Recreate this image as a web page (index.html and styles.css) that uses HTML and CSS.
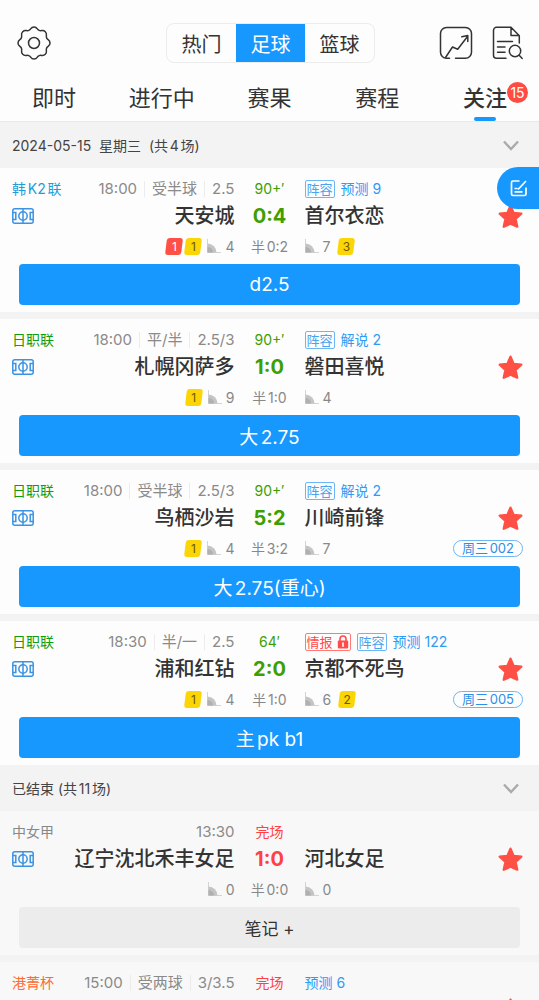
FILE: index.html
```html
<!DOCTYPE html>
<html lang="zh-CN">
<head>
    <meta charset="UTF-8">
    <meta name="viewport" content="width=device-width, initial-scale=1.0">
    <title>足球比分 - 关注</title>
    <link rel="stylesheet" href="styles.css">
</head>
<body>
    <!-- shared icons -->
    <svg class="sprite" aria-hidden="true">
        <symbol id="icon-pitch" viewBox="0 0 22 16">
            <g fill="none" stroke="currentColor" stroke-width="1.5">
                <rect x="0.8" y="0.8" width="20.4" height="14.4" rx="2"/>
                <path d="M11 0.8v14.4M0.8 4.5h3v7h-3M21.2 4.500h-3v7h3"/>
                <circle cx="11" cy="8" r="4.2"/>
            </g>
        </symbol>
        <symbol id="icon-corner" viewBox="0 0 14 14">
            <path d="M0.5 0v13.5H14" fill="none" stroke="#d4d4d4"/>
            <path d="M0.5 4.5a9 9 0 0 1 9 9h-9z" fill="#c4c4c4"/>
            <path d="M0.5 8a5.5 5.5 0 0 1 5.5 5.5H0.5z" fill="#b0b0b0"/>
        </symbol>
        <symbol id="icon-star" viewBox="0 0 24 24">
            <path d="M12 1.6l3 6.9 7.4 0.8-5.5 5.1 1.6 7.4L12 18.9l-6.500 2.900 1.600-7.400L1.600 9.300 9 8.500z" fill="currentColor" stroke="currentColor" stroke-width="2.2" stroke-linejoin="round"/>
        </symbol>
        <symbol id="icon-down" viewBox="0 0 16 11">
            <path d="M1 1.5l7 7.5 7-7.5" fill="none" stroke="currentColor" stroke-width="2.4"/>
        </symbol>
        <symbol id="icon-lock" viewBox="0 0 12 14">
            <path d="M3 6V4a3 3 0 0 1 6 0v2" fill="none" stroke="currentColor" stroke-width="1.6"/>
            <rect x="0.8" y="5.5" width="10.4" height="8" rx="1" fill="currentColor"/>
            <path d="M6 8v3.2" stroke="#fff" stroke-width="1.6" stroke-linecap="round"/>
        </symbol>
    </svg>

    <div class="app">
        <header class="header">
            <div class="toolbar">
                <button class="icon-btn" aria-label="设置">
                    <svg width="34" height="34" viewBox="-17 -17 34 34" fill="none" stroke="#333" stroke-width="1.5" stroke-linejoin="round">
                        <path d="M-5.2 -12.6C-3 -13.2 -3.5 -16 0 -16S3 -13.2 5.2 -12.6C7.2 -11.5 8.8 -13.8 11.3 -11.3S11.5 -7.2 12.6 -5.2C13.2 -3 16 -3.5 16 0S13.2 3 12.6 5.2C11.5 7.2 13.8 8.8 11.3 11.3S7.2 11.5 5.2 12.6C3 13.2 3.5 16 0 16S-3 13.2 -5.2 12.6C-7.2 11.5 -8.8 13.8 -11.3 11.3S-11.5 7.2 -12.6 5.2C-13.2 3 -16 3.5 -16 0S-13.2 -3 -12.6 -5.2C-11.5 -7.2 -13.8 -8.8 -11.3 -11.3S-7.2 -11.5 -5.2 -12.6Z"/>
                        <circle r="5.5"/>
                    </svg>
                </button>
                <nav class="sports">
                    <button class="sport">热门</button>
                    <button class="sport active">足球</button>
                    <button class="sport">篮球</button>
                </nav>
                <div class="tools">
                    <button class="icon-btn" aria-label="走势">
                        <svg width="34" height="34" viewBox="0 0 34 34" fill="none" stroke="#333" stroke-width="1.5" stroke-linecap="round" stroke-linejoin="round">
                            <path d="M10.5 32.3H7.5a6 6 0 0 1-6-6V7.5a6 6 0 0 1 6-6h19a6 6 0 0 1 6 6v18.8a6 6 0 0 1-6 6H16.5"/>
                            <path d="M6.5 31.5l7-10.5 5.2 2.200L28.5 10.5M22.8 10.8l6-1.2v6"/>
                        </svg>
                    </button>
                    <button class="icon-btn" aria-label="资料">
                        <svg width="32" height="34" viewBox="0 0 32 34" fill="none" stroke="#333" stroke-width="1.5" stroke-linecap="round" stroke-linejoin="round">
                            <path d="M14 32.3H4.5a3 3 0 0 1-3-3v-25a3 3 0 0 1 3-3H19l8.3 8.5V17M19 1.5v8h8M5.5 15.5h15M5.5 21h7.5M5.5 26.3h7.5"/>
                            <circle cx="23" cy="25" r="5.7"/>
                            <path d="M27.2 29.2l3 3.2"/>
                        </svg>
                    </button>
                </div>
            </div>
            <nav class="tabs">
                <a class="tab" href="#">即时</a>
                <a class="tab" href="#">进行中</a>
                <a class="tab" href="#">赛果</a>
                <a class="tab" href="#">赛程</a>
                <a class="tab active" href="#">关注<span class="badge">15</span></a>
            </nav>
        </header>

        <main class="list">
            <button class="section">
                <span>2024-05-15&nbsp; 星期三&nbsp; (共4场)</span>
                <svg class="down"><use href="#icon-down"/></svg>
            </button>

            <article class="match">
                <div class="grid">
                    <div class="home">
                        <span class="league blue">韩K2联</span>
                        <span class="info"><span>18:00</span><span>受半球</span><span>2.5</span></span>
                    </div>
                    <div class="mid time">90+′</div>
                    <div class="away tags"><a class="tag" href="#">阵容</a><a class="link" href="#">预测 9</a></div>

                    <div class="home">
                        <svg class="pitch"><use href="#icon-pitch"/></svg>
                        <span class="team">天安城</span>
                    </div>
                    <div class="mid score">0:4</div>
                    <div class="away">
                        <span class="team">首尔衣恋</span>
                        <button class="star" aria-label="取消关注"><svg><use href="#icon-star"/></svg></button>
                    </div>

                    <div class="home stats"><span class="card red">1</span><span class="card">1</span><svg class="corner"><use href="#icon-corner"/></svg><span>4</span></div>
                    <div class="mid half">半0:2</div>
                    <div class="away stats"><svg class="corner"><use href="#icon-corner"/></svg><span>7</span><span class="card">3</span></div>
                </div>
                <button class="note">d2.5</button>
            </article>

            <article class="match">
                <div class="grid">
                    <div class="home">
                        <span class="league">日职联</span>
                        <span class="info"><span>18:00</span><span>平/半</span><span>2.5/3</span></span>
                    </div>
                    <div class="mid time">90+′</div>
                    <div class="away tags"><a class="tag" href="#">阵容</a><a class="link" href="#">解说 2</a></div>

                    <div class="home">
                        <svg class="pitch"><use href="#icon-pitch"/></svg>
                        <span class="team">札幌冈萨多</span>
                    </div>
                    <div class="mid score">1:0</div>
                    <div class="away">
                        <span class="team">磐田喜悦</span>
                        <button class="star" aria-label="取消关注"><svg><use href="#icon-star"/></svg></button>
                    </div>

                    <div class="home stats"><span class="card">1</span><svg class="corner"><use href="#icon-corner"/></svg><span>9</span></div>
                    <div class="mid half">半1:0</div>
                    <div class="away stats"><svg class="corner"><use href="#icon-corner"/></svg><span>4</span></div>
                </div>
                <button class="note">大2.75</button>
            </article>

            <article class="match">
                <div class="grid">
                    <div class="home">
                        <span class="league">日职联</span>
                        <span class="info"><span>18:00</span><span>受半球</span><span>2.5/3</span></span>
                    </div>
                    <div class="mid time">90+′</div>
                    <div class="away tags"><a class="tag" href="#">阵容</a><a class="link" href="#">解说 2</a></div>

                    <div class="home">
                        <svg class="pitch"><use href="#icon-pitch"/></svg>
                        <span class="team">鸟栖沙岩</span>
                    </div>
                    <div class="mid score">5:2</div>
                    <div class="away">
                        <span class="team">川崎前锋</span>
                        <button class="star" aria-label="取消关注"><svg><use href="#icon-star"/></svg></button>
                    </div>

                    <div class="home stats"><span class="card">1</span><svg class="corner"><use href="#icon-corner"/></svg><span>4</span></div>
                    <div class="mid half">半3:2</div>
                    <div class="away stats"><svg class="corner"><use href="#icon-corner"/></svg><span>7</span><span class="lottery">周三002</span></div>
                </div>
                <button class="note">大2.75(重心)</button>
            </article>

            <article class="match">
                <div class="grid">
                    <div class="home">
                        <span class="league">日职联</span>
                        <span class="info"><span>18:30</span><span>半/一</span><span>2.5</span></span>
                    </div>
                    <div class="mid time">64′</div>
                    <div class="away tags"><a class="tag intel" href="#">情报<svg><use href="#icon-lock"/></svg></a><a class="tag" href="#">阵容</a><a class="link" href="#">预测 122</a></div>

                    <div class="home">
                        <svg class="pitch"><use href="#icon-pitch"/></svg>
                        <span class="team">浦和红钻</span>
                    </div>
                    <div class="mid score">2:0</div>
                    <div class="away">
                        <span class="team">京都不死鸟</span>
                        <button class="star" aria-label="取消关注"><svg><use href="#icon-star"/></svg></button>
                    </div>

                    <div class="home stats"><span class="card">1</span><svg class="corner"><use href="#icon-corner"/></svg><span>4</span></div>
                    <div class="mid half">半1:0</div>
                    <div class="away stats"><svg class="corner"><use href="#icon-corner"/></svg><span>6</span><span class="card">2</span><span class="lottery">周三005</span></div>
                </div>
                <button class="note">主pk b1</button>
            </article>

            <button class="section">
                <span>已结束 (共11场)</span>
                <svg class="down"><use href="#icon-down"/></svg>
            </button>

            <article class="match finished">
                <div class="grid">
                    <div class="home">
                        <span class="league gray">中女甲</span>
                        <span class="info"><span>13:30</span></span>
                    </div>
                    <div class="mid time">完场</div>
                    <div class="away tags"></div>

                    <div class="home">
                        <svg class="pitch"><use href="#icon-pitch"/></svg>
                        <span class="team">辽宁沈北禾丰女足</span>
                    </div>
                    <div class="mid score">1:0</div>
                    <div class="away">
                        <span class="team">河北女足</span>
                        <button class="star" aria-label="取消关注"><svg><use href="#icon-star"/></svg></button>
                    </div>

                    <div class="home stats"><svg class="corner"><use href="#icon-corner"/></svg><span>0</span></div>
                    <div class="mid half">半0:0</div>
                    <div class="away stats"><svg class="corner"><use href="#icon-corner"/></svg><span>0</span></div>
                </div>
                <button class="note empty">笔记 +</button>
            </article>

            <article class="match finished">
                <div class="grid">
                    <div class="home">
                        <span class="league orange">港菁杯</span>
                        <span class="info"><span>15:00</span><span>受两球</span><span>3/3.5</span></span>
                    </div>
                    <div class="mid time">完场</div>
                    <div class="away tags"><a class="link" href="#">预测 6</a></div>

                    <div class="home"></div>
                    <div class="mid"></div>
                    <div class="away">
                        <button class="star" aria-label="取消关注"><svg><use href="#icon-star"/></svg></button>
                    </div>
                </div>
            </article>
        </main>

        <button class="float-btn" aria-label="写笔记">
            <svg width="18" height="18" viewBox="0 0 18 18" fill="none" stroke="#fff" stroke-width="1.7">
                <path d="M9.5 2H3a1.5 1.5 0 0 0-1.5 1.5V15A1.5 1.5 0 0 0 3 16.5h11.5A1.5 1.5 0 0 0 16 15V8.5M16 2L8 10.5M4.5 9.5h3M4.5 12.8h8"/>
            </svg>
        </button>
    </div>
</body>
</html>
```
FILE: styles.css
```css
* {
    box-sizing: border-box;
}
body {
    margin: 0;
    font-family: Inter, "Noto Sans CJK SC", sans-serif;
    text-autospace: normal;
    color: #333;
    background-color: #f3f3f3;
}
button {
    padding: 0;
    border: none;
    background: none;
    font-family: inherit;
    color: inherit;
    cursor: pointer;
}
a {
    color: inherit;
    text-decoration: none;
}
svg {
    display: block;
}
.sprite {
    position: absolute;
    width: 0;
    height: 0;
}
.app {
    position: relative;
    display: flex;
    flex-direction: column;
    height: 100vh;
}

/* header */
.header {
    background-color: #fdfdfd;
    border-bottom: 1px solid #e9e9e9;
}
.toolbar {
    display: grid;
    grid-template-columns: 1fr auto 1fr;
    align-items: center;
    justify-items: start;
    padding: 23px 15px 12px 17px;
}
.tools {
    display: flex;
    justify-self: end;
    gap: 19px;
}
.sports {
    display: flex;
    border: 1px solid #ececec;
    border-radius: 8px;
    overflow: hidden;
}
.sport {
    width: 69px;
    height: 38px;
    font-size: 20px;
}
.sport.active {
    background-color: #1698ff;
    color: #fff;
}
.tabs {
    display: grid;
    grid-template-columns: repeat(5, 1fr);
}
.tab {
    position: relative;
    height: 46px;
    line-height: 46px;
    font-size: 22px;
    text-align: center;
}
.tab.active {
    font-weight: 500;
}
.tab.active::after {
    content: "";
    position: absolute;
    left: 50%;
    bottom: 0;
    width: 22px;
    height: 4px;
    margin-left: -11px;
    border-radius: 2px;
    background-color: #1698ff;
}
.badge {
    position: absolute;
    top: 7px;
    right: 11px;
    width: 21px;
    height: 21px;
    border-radius: 50%;
    background-color: #ff4b41;
    color: #fff;
    font-size: 14px;
    font-weight: 400;
    line-height: 21px;
}

/* match list */
.list {
    flex: 1;
    min-height: 0;
    overflow-y: auto;
    scrollbar-width: none;
}
.section {
    display: flex;
    align-items: center;
    justify-content: space-between;
    width: 100%;
    height: 46px;
    padding: 0 20px 0 12px;
    background-color: #f3f3f3;
    color: #444;
    font-size: 14px;
}
.down {
    width: 16px;
    height: 11px;
    color: #aaa;
}
.match {
    padding-bottom: 7px;
    background-color: #fdfdfd;
}
.match + .match {
    margin-top: 7px;
}
.finished {
    background-color: #f8f8f8;
}
.grid {
    display: grid;
    grid-template-columns: 1fr 70px 1fr;
    grid-template-rows: 20px 34px 26px;
    padding: 11px 0 5px;
}
.home,
.away {
    display: flex;
    align-items: center;
    white-space: nowrap;
}
.home {
    justify-content: space-between;
    padding-left: 12px;
}
.away {
    padding-right: 16px;
}
.mid {
    display: flex;
    align-items: center;
    justify-content: center;
}
.league {
    color: #0e9d0e;
    font-size: 14px;
    line-height: 18px;
}
.league.blue {
    color: #1a9fd9;
}
.league.gray {
    color: #888;
}
.league.orange {
    color: #ff6a33;
}
.info {
    display: flex;
    align-items: center;
    color: #8a8a8a;
    font-size: 15px;
    line-height: 16px;
}
.info span + span {
    margin-left: 7px;
    padding-left: 7px;
    border-left: 1px solid #ececec;
}
.time {
    color: #3f9f00;
    font-size: 14px;
    line-height: 18px;
}
.score {
    color: #3f9f00;
    font-size: 20px;
    font-weight: 700;
}
.finished .time,
.finished .score {
    color: #ff4141;
}
.tags {
    gap: 6px;
    font-size: 14px;
    line-height: 18px;
}
.tag {
    display: flex;
    align-items: center;
    gap: 4px;
    height: 18px;
    padding: 0 1px;
    border: 1px solid #6db6f5;
    border-radius: 2px;
    color: #4ba3ee;
    font-size: 13px;
    line-height: 16px;
}
.tag.intel {
    border-color: #ff7a75;
    color: #ff4b4b;
}
.tag svg {
    width: 12px;
    height: 14px;
}
.link {
    color: #2c9cf5;
}
.pitch {
    width: 22px;
    height: 16px;
    color: #3c93e2;
}
.team {
    font-size: 20px;
    font-weight: 500;
    line-height: 28px;
}
.star {
    margin-left: auto;
    color: #ff5045;
}
.star svg {
    width: 25px;
    height: 25px;
}
.stats {
    gap: 4px;
    color: #888;
    font-size: 14px;
}
.home.stats {
    justify-content: flex-end;
}
.card {
    position: relative;
    z-index: 0;
    width: 16px;
    height: 17px;
    margin: 0 2px;
    color: #6b5800;
    font-size: 12px;
    line-height: 17px;
    text-align: center;
}
/* slanted card behind the upright number */
.card::before {
    content: "";
    position: absolute;
    inset: 0;
    z-index: -1;
    border-radius: 3px;
    background-color: #fbd505;
    transform: skewX(-7deg);
}
.card.red {
    margin-right: -3px;
    color: #fff;
}
.card.red::before {
    background-color: #ff5045;
}
.away .card {
    margin-left: 4px;
}
.corner {
    width: 14px;
    height: 14px;
}
.half {
    color: #888;
    font-size: 14px;
}
.lottery {
    height: 17px;
    margin-left: auto;
    padding: 0 8px;
    border: 1px solid #6db6f5;
    border-radius: 9px;
    color: #2c8fe6;
    font-size: 13px;
    line-height: 15px;
}
.note {
    display: block;
    width: calc(100% - 38px);
    height: 41px;
    margin: 0 19px;
    border-radius: 4px;
    background-color: #1698ff;
    color: #fff;
    font-size: 19px;
}
.note.empty {
    background-color: #ececec;
    color: #333;
    font-size: 17px;
}

/* floating shortcut on the right edge */
.float-btn {
    position: absolute;
    top: 167px;
    right: 0;
    display: flex;
    align-items: center;
    width: 42px;
    height: 42px;
    padding-left: 13px;
    border-radius: 21px 0 0 21px;
    background-color: #1698ff;
}
```
